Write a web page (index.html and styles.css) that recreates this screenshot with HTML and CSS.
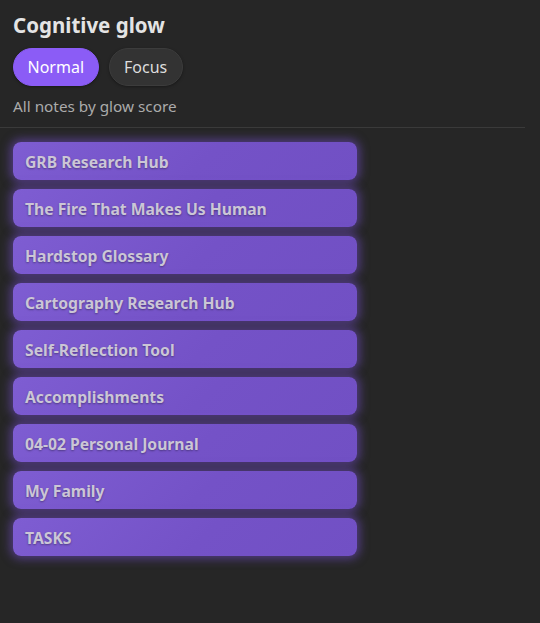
FILE: index.html
```html
<!DOCTYPE html>
<html lang="en">
<head>
<meta charset="utf-8">
<title>Cognitive glow</title>
<link rel="stylesheet" href="styles.css">
</head>
<body>
<div class="pane">
  <header class="head">
    <h1 class="title">Cognitive glow</h1>
    <div class="modes">
      <button class="mode mode-active">Normal</button>
      <button class="mode">Focus</button>
    </div>
    <p class="sub">All notes by glow score</p>
  </header>
  <ul class="notes">
    <li class="note">GRB Research Hub</li>
    <li class="note">The Fire That Makes Us Human</li>
    <li class="note">Hardstop Glossary</li>
    <li class="note">Cartography Research Hub</li>
    <li class="note">Self-Reflection Tool</li>
    <li class="note">Accomplishments</li>
    <li class="note">04-02 Personal Journal</li>
    <li class="note">My Family</li>
    <li class="note">TASKS</li>
  </ul>
</div>
</body>
</html>
```

FILE: styles.css
```css
html, body {
  margin: 0;
  background: #262626;
  height: 100%;
}
body {
  font-family: "Noto Sans", "Open Sans", sans-serif;
  color: #dcdcdc;
}
.pane {
  width: 525px;
}
.head {
  padding: 12px 13px 10px 13px;
  border-bottom: 1px solid #3a3a3a;
}
.title {
  margin: 0;
  font-size: 20.5px;
  font-weight: 700;
  line-height: 27px;
  color: #e4e4e4;
}
.modes {
  display: flex;
  gap: 10px;
  margin-top: 9px;
}
.mode {
  font-family: inherit;
  font-size: 16px;
  height: 38px;
  padding: 0 14.5px;
  border-radius: 19px;
  border: 1px solid #3c3c3c;
  background: #333333;
  color: #dddddd;
  box-shadow: 0 1px 3px rgba(0,0,0,0.35);
}
.mode-active {
  padding: 0 13.5px;
  background: #8b5cf6;
  border-color: #8b5cf6;
  color: #ffffff;
}
.sub {
  margin: 9px 0 0 0;
  font-size: 15.3px;
  line-height: 22px;
  color: #ababab;
}
.notes {
  list-style: none;
  margin: 0;
  padding: 14px 0 0 13px;
  display: flex;
  flex-direction: column;
  gap: 9px;
}
.note {
  width: 344px;
  height: 38px;
  box-sizing: border-box;
  padding: 1px 12px 0 12px;
  display: flex;
  align-items: center;
  border-radius: 8px;
  background: linear-gradient(135deg, #7e5dd2 0%, #7452c7 55%, #7150c4 100%);
  box-shadow: 0 0 10px 3px rgba(124, 82, 220, 0.5);
  font-size: 15.7px;
  font-weight: 700;
  color: #cbc6d6;
  text-shadow: 0 1px 2px rgba(0,0,0,0.35);
  white-space: nowrap;
}
```
